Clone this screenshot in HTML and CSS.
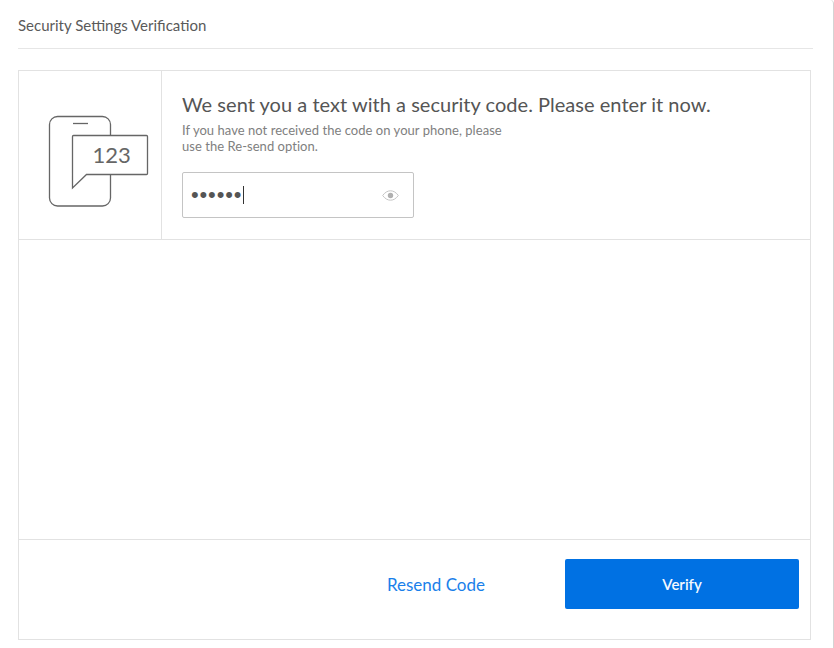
FILE: index.html
```html
<!DOCTYPE html>
<html lang="en">
<head>
<meta charset="utf-8">
<title>Security Settings Verification</title>
<link rel="stylesheet" href="styles.css">
</head>
<body>
<div class="window">
  <header class="title-bar">Security Settings Verification</header>
  <main class="panel">
    <section class="top-row">
      <div class="icon-cell">
        <svg class="phone-icon" width="143" height="168" viewBox="0 0 143 168" fill="none">
          <rect x="31.500" y="46.500" width="61" height="89.500" rx="8" stroke="#666" stroke-width="1.300"/>
          <path d="M55 53.500H70" stroke="#666" stroke-width="1.300"/>
          <path d="M55.500 65.500H128.500a1 1 0 0 1 1 1V103.500a1 1 0 0 1-1 1H68.500L54.500 118V66.500a1 1 0 0 1 1-1Z" fill="#fff" stroke="#666" stroke-width="1.300"/>
          <text class="code-text" x="74.500" y="93">123</text>
        </svg>
      </div>
      <div class="form-cell">
        <h1 class="headline">We sent you a text with a security code. Please enter it now.</h1>
        <p class="hint">If you have not received the code on your phone, please<br>use the Re-send option.</p>
        <div class="code-field">
          <span class="dots">••••••</span><span class="caret"></span>
          <svg class="eye" width="17" height="11" viewBox="0 0 17 11" fill="none">
            <path d="M.7 5.500C3 2.300 5.600.8 8.500.8s5.500 1.500 7.800 4.700c-2.300 3.200-4.900 4.700-7.800 4.700S3 8.700.7 5.500Z" stroke="#c4c4c4" stroke-width="1"/>
            <circle cx="8.500" cy="5.500" r="2.700" fill="#b0b0b0"/>
          </svg>
        </div>
      </div>
    </section>
    <section class="spacer"></section>
    <footer class="actions">
      <a class="resend" href="#">Resend Code</a>
      <button class="verify" type="button">Verify</button>
    </footer>
  </main>
</div>
</body>
</html>
```

FILE: styles.css
```css
* { box-sizing: border-box; }
html, body { margin: 0; padding: 0; background: #fff; }
body { font-family: Lato, "Liberation Sans", sans-serif; color: #4a4a4a; }
.window {
  width: 834px;
  height: 648px;
  padding-left: 18px;
  border-right: 1px solid #d4d4d4;
  border-top-right-radius: 4px;
  overflow: hidden;
}
.title-bar {
  width: 795px;
  height: 49px;
  padding-top: 15px;
  font-size: 15px;
  line-height: 20px;
  color: #5a5a5a;
  border-bottom: 1px solid #e6e6e6;
}
.panel {
  width: 793px;
  height: 570px;
  margin-top: 21px;
  border: 1px solid #e2e2e2;
  display: flex;
  flex-direction: column;
}
.top-row { display: flex; height: 169px; border-bottom: 1px solid #e2e2e2; }
.icon-cell { width: 143px; border-right: 1px solid #e2e2e2; flex: none; }
.phone-icon { display: block; margin-top: -1px; margin-left: -1px; }
.code-text { font-family: Lato, sans-serif; font-size: 22px; font-weight: 400; fill: #666; }
.form-cell { padding: 19px 0 0 20px; }
.headline { margin: 0; font-size: 20px; line-height: 28px; font-weight: 400; color: #555; letter-spacing: .03px; }
.hint { margin: 4px 0 0; font-size: 13px; line-height: 16px; color: #808080; letter-spacing: .04px; }
.code-field {
  display: flex;
  align-items: center;
  width: 232px;
  height: 46px;
  margin-top: 18px;
  padding: 0 14px 0 8px;
  border: 1px solid #c4c4c4;
  border-radius: 2px;
}
.dots { font-size: 22px; line-height: 20px; color: #555; font-family: "Liberation Sans", sans-serif; letter-spacing: .85px; }
.caret { width: 1px; height: 18px; background: #333; margin-left: 1px; }
.eye { margin-left: auto; }
.spacer { flex: 1; }
.actions {
  height: 100px;
  border-top: 1px solid #e2e2e2;
  display: flex;
  align-items: flex-start;
  justify-content: flex-end;
  padding: 19px 11px 0 0;
}
.resend { font-size: 17px; line-height: 50px; color: #1a7fea; text-decoration: none; margin-right: 80px; margin-top: 1px; }
.verify {
  width: 234px;
  height: 50px;
  border: 0;
  border-radius: 2px;
  background: #0071e3;
  color: #f4f9ff;
  font-family: Lato, sans-serif;
  font-size: 15px;
  font-weight: 600;
}
```
